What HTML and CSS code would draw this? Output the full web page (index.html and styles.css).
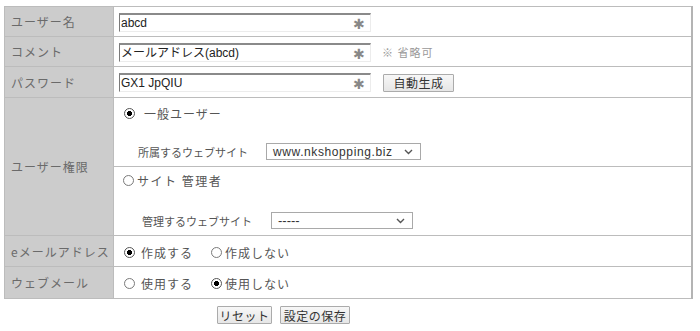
FILE: index.html
```html
<!DOCTYPE html>
<html lang="ja">
<head>
<meta charset="utf-8">
<title>ユーザー設定</title>
<link rel="stylesheet" href="styles.css">
</head>
<body>
<div class="page">
<table class="form">
  <tr class="r30">
    <th>ユーザー名</th>
    <td class="pad5"><span class="field"><span class="val">abcd</span><span class="req">✱</span></span></td>
  </tr>
  <tr class="r30">
    <th>コメント</th>
    <td class="pad5"><span class="field"><span class="val">メールアドレス(abcd)</span><span class="req">✱</span></span><span class="note">※ 省略可</span></td>
  </tr>
  <tr class="r31">
    <th>パスワード</th>
    <td class="pad5"><span class="field"><span class="val">GX1 JpQIU</span><span class="req">✱</span></span><span class="btn gen">自動生成</span></td>
  </tr>
  <tr class="r69">
    <th rowspan="2" class="mid">ユーザー権限</th>
    <td>
      <div class="sub sub1">
        <div class="line l1"><span class="radio on"></span><span class="rl wide">一般ユーザー</span></div>
        <div class="line l2a"><span class="sl">所属するウェブサイト</span><span class="sel s1"><span>www.nkshopping.biz</span><svg width="9" height="6" viewBox="0 0 9 6"><path d="M1 1 L4.5 4.5 L8 1" fill="none" stroke="#555" stroke-width="1.4"/></svg></span></div>
      </div>
    </td>
  </tr>
  <tr class="r69">
    <td>
      <div class="sub sub2">
        <div class="line l1b"><span class="radio"></span><span class="rl wide2">サイト 管理者</span></div>
        <div class="line l2b"><span class="sl">管理するウェブサイト</span><span class="sel s2"><span class="dash">-----</span><svg width="9" height="6" viewBox="0 0 9 6"><path d="M1 1 L4.5 4.5 L8 1" fill="none" stroke="#555" stroke-width="1.4"/></svg></span></div>
      </div>
    </td>
  </tr>
  <tr class="r31">
    <th>eメールアドレス</th>
    <td class="pad11"><span class="opt o1"><span class="radio on"></span><span class="rl">作成する</span></span><span class="opt"><span class="radio"></span><span class="rl tight">作成しない</span></span></td>
  </tr>
  <tr class="r32">
    <th>ウェブメール</th>
    <td class="pad11"><span class="opt o1"><span class="radio"></span><span class="rl">使用する</span></span><span class="opt"><span class="radio on"></span><span class="rl tight">使用しない</span></span></td>
  </tr>
</table>
<div class="actions">
  <span class="btn b1">リセット</span>
  <span class="btn b2">設定の保存</span>
</div>
</div>
</body>
</html>
```
FILE: styles.css
```css
* { box-sizing: border-box; }
html, body { margin: 0; padding: 0; background: #fff; }
body { font-family: "Noto Sans CJK JP", "Liberation Sans", sans-serif; font-size: 12px; color: #444; }
.page { padding: 6px 0 0 4px; width: 700px; }
.form { border-collapse: collapse; width: 689px; }
.form th, .form td { border: 1px solid #bcbcbc; padding: 0; }
.form tr > :last-child { border-right: 2px solid #b4b4b4; }
.form th {
  width: 109px; background: #cccccc; color: #6a6a6a; font-weight: normal;
  text-align: left; padding-left: 6px; letter-spacing: 1px; font-size: 12px; vertical-align: middle;
}
.r30 { height: 30px; }
.r31 { height: 31px; }
.r32 { height: 32px; }
.r69 { height: 69px; }
.pad5 { padding-left: 5px !important; }
.pad11 { padding-left: 10px !important; }
.field {
  display: inline-flex; align-items: center; width: 252px; height: 19px; vertical-align: middle;
  border-style: solid; border-width: 2px 1px 1px 1px;
  border-color: #8a8a8a #ececec #ececec #7a7a7a;
  background: #fff; padding-left: 1px;
}
.val { flex: 1; font-family: "Liberation Sans", "Noto Sans CJK JP", sans-serif; font-size: 12px; color: #222; line-height: 16px; }
.req { color: #888; font-size: 14px; width: 17px; text-align: left; line-height: 16px; }
.note { color: #999; margin-left: 11px; vertical-align: middle; letter-spacing: 1px; font-size: 11px; }
.btn {
  display: inline-flex; align-items: center; justify-content: center; vertical-align: middle;
  height: 18px; border: 1px solid #ababab; border-radius: 1px;
  background: linear-gradient(#f7f7f7, #e6e6e6); color: #333; font-size: 12px; letter-spacing: 0.5px;
}
.gen { width: 71px; margin-left: 12px; }
.sub { display: flex; flex-direction: column; }
.sub1 { padding: 7px 0 6px 10px; gap: 21px; }
.sub2 { padding: 5px 0 6px 9px; gap: 23px; }
.line { display: flex; align-items: center; height: 17px; }
.radio {
  display: inline-block; width: 11px; height: 11px; border-radius: 50%;
  border: 1px solid #7c7c7c; background: radial-gradient(circle, #fff 60%, #e6e6e6 100%); flex: none;
}
.radio.on { border-color: #555; background: radial-gradient(circle, #000 0 2.3px, #fff 2.8px); }
.rl { color: #555; margin-left: 6px; font-size: 12px; letter-spacing: 1px; }
.wide { margin-left: 9px; letter-spacing: 1px; }
.wide2 { margin-left: 3px; letter-spacing: 1.5px; }
.tight { margin-left: 3px; }
.sl { color: #555; font-size: 11px; letter-spacing: 0; }
.l2a { padding-left: 14px; }
.l2b { padding-left: 19px; }
.sel {
  display: inline-flex; align-items: center; justify-content: space-between;
  height: 17px; border: 1px solid #a9a9a9; background: #fff; padding: 0 7px 0 6px;
  font-family: "Liberation Sans", sans-serif; font-size: 12px; color: #333; letter-spacing: 0.6px;
}
.s1 { width: 155px; margin-left: 18px; }
.s2 { width: 142px; margin-left: 19px; }
.dash { letter-spacing: 0; font-size: 13px; }
.opt { display: inline-flex; align-items: center; vertical-align: middle; }
.o1 { width: 87px; }
.actions { display: flex; gap: 8px; padding: 7px 0 0 213px; }
.b1 { width: 55px; }
.b2 { width: 70px; }
```
